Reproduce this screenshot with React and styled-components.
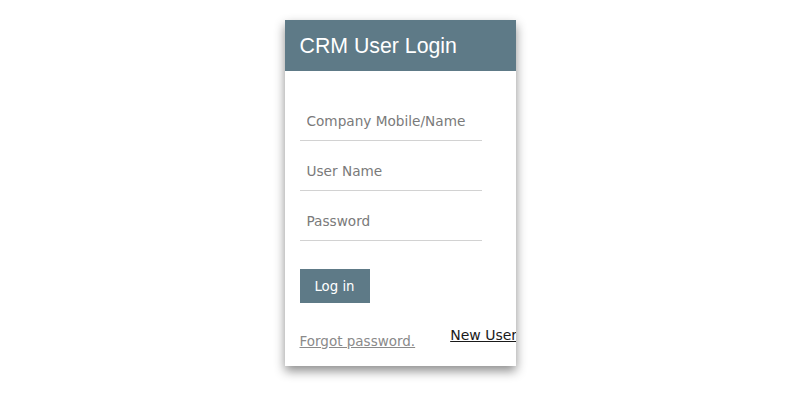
import React from "react";
import styled, { createGlobalStyle } from "styled-components";

const Global = createGlobalStyle`
  html, body { margin: 0; padding: 0; background: #ffffff; }
  body { font-family: "DejaVu Sans", sans-serif; }
  input::placeholder { color: #7a7a7a; opacity: 1; }
`;

const Page = styled.div`
  width: 800px;
  height: 400px;
  display: flex;
  justify-content: center;
  align-items: flex-start;
  padding-top: 20px;
  box-sizing: border-box;
`;

const Card = styled.div`
  width: 231px;
  height: 346px;
  background: #ffffff;
  box-shadow: 0 5px 10px rgba(0, 0, 0, 0.45);
  overflow: hidden;
  display: flex;
  flex-direction: column;
`;

const Header = styled.div`
  height: 51px;
  background: #5e7a87;
  display: flex;
  align-items: center;
  padding-left: 15px;
  padding-top: 1px;
  box-sizing: border-box;
`;

const Title = styled.h1`
  margin: 0;
  font-family: "Liberation Sans", Arial, sans-serif;
  font-weight: 400;
  font-size: 21.3px;
  color: #ffffff;
`;

const Form = styled.form`
  padding: 30px 15px 0 15px;
  display: flex;
  flex-direction: column;
  gap: 10px;
`;

const Field = styled.input`
  width: 182px;
  height: 40px;
  box-sizing: border-box;
  border: none;
  border-bottom: 1px solid #d2d2d2;
  padding: 0 7px;
  font-family: "DejaVu Sans", sans-serif;
  font-size: 13.65px;
  color: #333;
  outline: none;
  background: transparent;
`;

const Button = styled.button`
  margin-top: 18px;
  width: 70px;
  height: 34px;
  border: none;
  background: #5e7a87;
  color: #ffffff;
  font-family: "DejaVu Sans", sans-serif;
  font-size: 13.3px;
  padding: 0;
  cursor: pointer;
`;

const Footer = styled.div`
  display: flex;
  align-items: flex-start;
  gap: 35px;
  margin-top: 14px;
  white-space: nowrap;
`;

const Link = styled.a`
  flex-shrink: 0;
  font-family: "DejaVu Sans", sans-serif;
  font-size: ${(p) => (p.$muted ? "13.5px" : "14px")};
  color: ${(p) => (p.$muted ? "#8a8a8a" : "#1a1a1a")};
  text-decoration: underline;
  margin-top: ${(p) => (p.$muted ? "6px" : "0")};
`;

export default function App() {
  return (
    <>
      <Global />
      <Page>
        <Card>
          <Header>
            <Title>CRM User Login</Title>
          </Header>
          <Form onSubmit={(e) => e.preventDefault()}>
            <Field placeholder="Company Mobile/Name" />
            <Field placeholder="User Name" />
            <Field type="password" placeholder="Password" />
            <Button type="submit">Log in</Button>
            <Footer>
              <Link href="#" $muted>Forgot password.</Link>
              <Link href="#">New User</Link>
            </Footer>
          </Form>
        </Card>
      </Page>
    </>
  );
}
